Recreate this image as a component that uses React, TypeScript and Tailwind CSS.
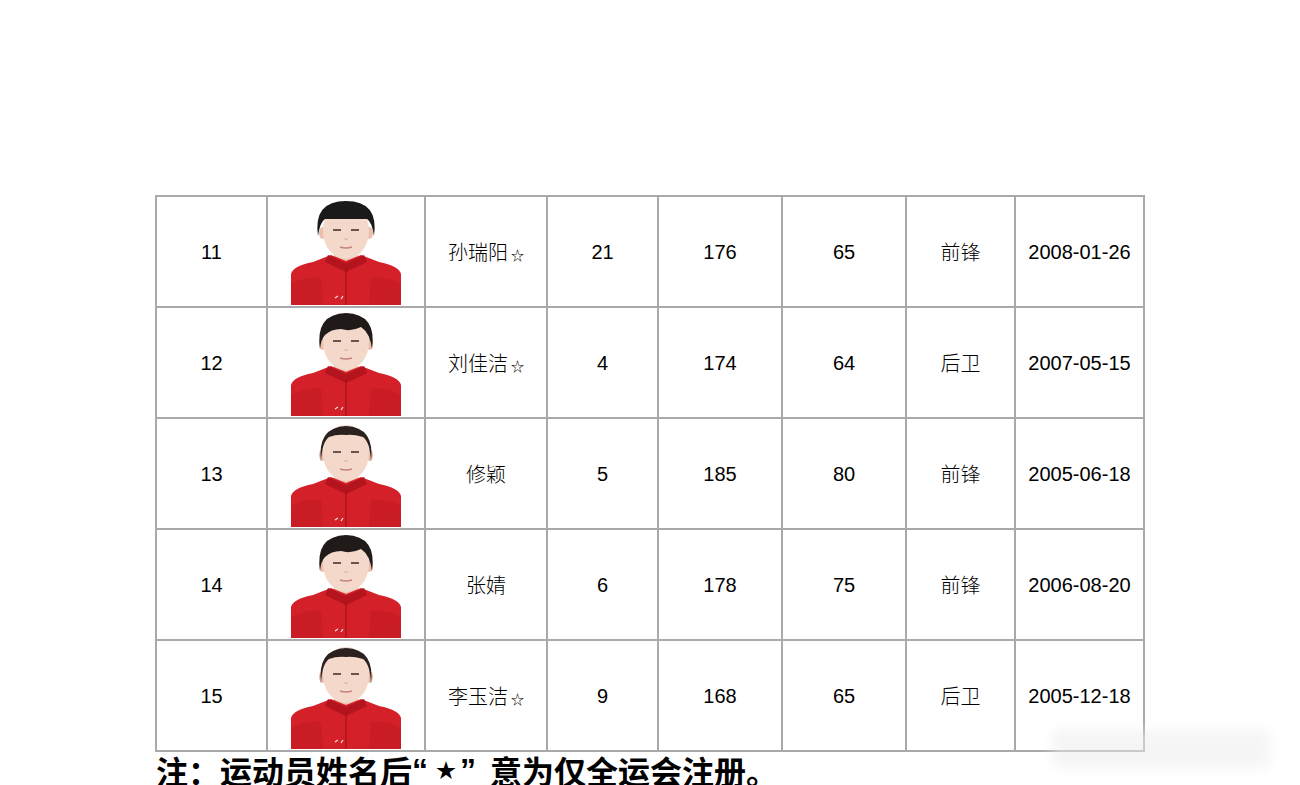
const rows = [
  { no: "11", name: "孙瑞阳", star: true, num: "21", h: "176", w: "65", pos: "前锋", dob: "2008-01-26", hair: "short" },
  { no: "12", name: "刘佳洁", star: true, num: "4", h: "174", w: "64", pos: "后卫", dob: "2007-05-15", hair: "bangs" },
  { no: "13", name: "修颖", star: false, num: "5", h: "185", w: "80", pos: "前锋", dob: "2005-06-18", hair: "back" },
  { no: "14", name: "张婧", star: false, num: "6", h: "178", w: "75", pos: "前锋", dob: "2006-08-20", hair: "bangs" },
  { no: "15", name: "李玉洁", star: true, num: "9", h: "168", w: "65", pos: "后卫", dob: "2005-12-18", hair: "back" },
];

const Photo = ({ hair }: { hair: string }) => (
  <svg width="110" height="107" viewBox="0 0 110 107" className="block">
    <rect width="110" height="107" fill="#ffffff" />
    <rect x="43" y="44" width="24" height="22" fill="#ecc3b0" />
    <path d="M0 107 L0 76 Q2 68 22 64 L40 57 L55 63 L70 57 L88 64 Q108 68 110 76 L110 107 Z" fill="#d42029" />
    <path d="M37 57 L55 65 L73 57 L76 64 L55 74 L34 64 Z" fill="#b3141d" />
    <line x1="55" y1="70" x2="55" y2="107" stroke="#a3121a" strokeWidth="1.2" />
    <path d="M0 86 Q16 78 30 80 L32 107 L0 107 Z" fill="#c01922" opacity="0.55" />
    <path d="M110 86 Q94 78 80 80 L78 107 L110 107 Z" fill="#c01922" opacity="0.55" />
    <path d="M44 100 L47 98 M50 101 L52 98" stroke="#f3e3e3" strokeWidth="1.2" />
    <ellipse cx="31.5" cy="35" rx="3.5" ry="6" fill="#eac0ad" />
    <ellipse cx="78.5" cy="35" rx="3.5" ry="6" fill="#eac0ad" />
    <ellipse cx="55" cy="33" rx="23" ry="28" fill="#f4d8ca" />
    {hair === "short" ? (
      <path d="M27 38 Q22 3 55 3 Q88 3 83 38 Q81 24 76 21 L34 21 Q29 24 27 38 Z" fill="#1a1a1a" />
    ) : hair === "bangs" ? (
      <path d="M29 40 Q24 5 55 4 Q86 5 81 40 Q79 24 70 18 Q60 23 50 20 Q40 20 34 26 Q30 30 29 40 Z" fill="#201a18" />
    ) : (
      <path d="M30 42 Q26 7 55 6 Q84 7 80 42 Q79 22 72 17 Q62 14 55 15 Q46 14 38 17 Q31 22 30 42 Z" fill="#2b2220" />
    )}
    <path d="M42 32 L50 32 M60 32 L68 32" stroke="#3a2a26" strokeWidth="1.6" />
    <path d="M53 40 L55 42 L57 40" stroke="#dcae9c" strokeWidth="1" fill="none" />
    <path d="M49 49 Q55 51 61 49" stroke="#c4847a" strokeWidth="1.6" fill="none" />
  </svg>
);

const cell = "border-2 border-[#a9a9a9] text-center align-middle text-[20px] text-black";
const cjk = "font-['Noto_Sans_CJK_SC',sans-serif] font-light";

export default function App() {
  return (
    <div className="relative w-[1300px] h-[785px] overflow-hidden bg-white font-['Liberation_Sans',Arial,sans-serif]">
      <div className="pt-[195px] pl-[155px]">
        <table className="border-collapse table-fixed w-[988px]">
          <colgroup>
            <col className="w-[111px]" />
            <col className="w-[158px]" />
            <col className="w-[122px]" />
            <col className="w-[111px]" />
            <col className="w-[124px]" />
            <col className="w-[124px]" />
            <col className="w-[109px]" />
            <col className="w-[129px]" />
          </colgroup>
          <tbody>
            {rows.map((r) => (
              <tr key={r.no} className="h-[111px]">
                <td className={cell}>{r.no}</td>
                <td className={`${cell} align-bottom p-0`}>
                  <div className="flex justify-center">
                    <Photo hair={r.hair} />
                  </div>
                </td>
                <td className={`${cell} ${cjk}`}>
                  {r.name}
                  {r.star && <span className="text-[13px] ml-[3px] font-normal">☆</span>}
                </td>
                <td className={cell}>{r.num}</td>
                <td className={cell}>{r.h}</td>
                <td className={cell}>{r.w}</td>
                <td className={`${cell} ${cjk}`}>{r.pos}</td>
                <td className={cell}>{r.dob}</td>
              </tr>
            ))}
          </tbody>
        </table>
        <div className="flex pl-[1px] text-[32px] leading-[36px] font-bold text-black font-['Noto_Sans_CJK_SC',sans-serif] whitespace-nowrap">
          <span>注：运动员姓名后</span>
          <span className="inline-block w-[20px] font-['Liberation_Sans',sans-serif]">“</span>
          <span className="inline-block w-[28px] text-center text-[20px]">★</span>
          <span className="inline-block w-[30px] font-['Liberation_Sans',sans-serif]">”</span>
          <span>意为仅全运会注册。</span>
        </div>
      </div>
      <div className="absolute left-[1052px] top-[730px] w-[218px] h-[38px] bg-[#ececec] opacity-50 blur-[6px] rounded-md" />
    </div>
  );
}
